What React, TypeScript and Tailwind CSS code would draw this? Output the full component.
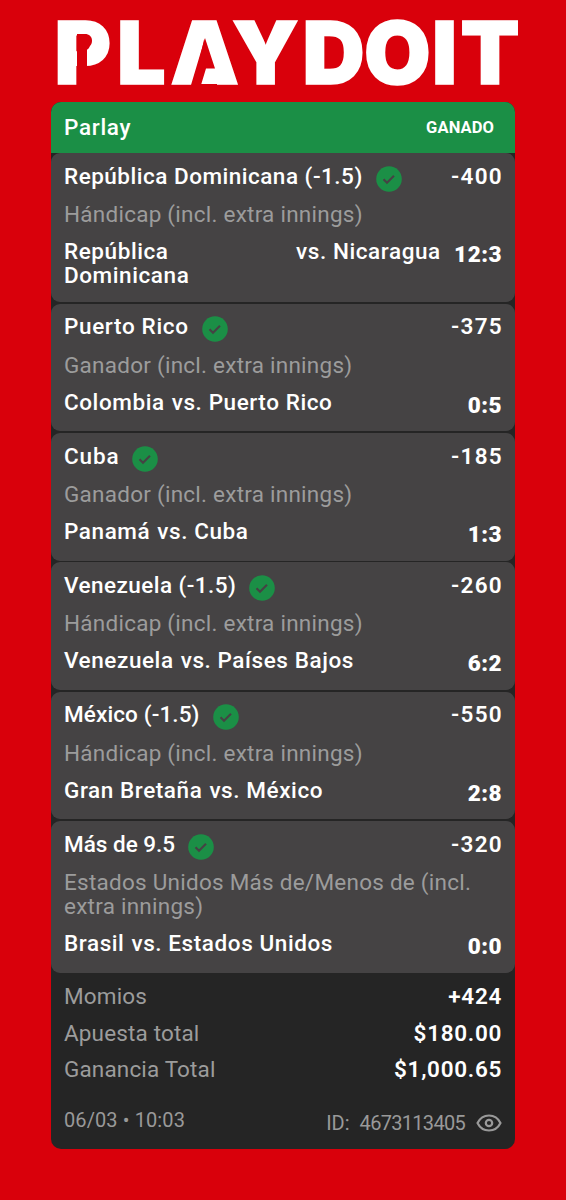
type Leg = {
  pick: string
  pickSpacing: string
  odds: string
  market: string
  home: string
  away: string
  score: string
  stacked?: boolean
}

const legs: Leg[] = [
  { pick: 'República Dominicana (-1.5)', pickSpacing: 'tracking-[0.5px]', odds: '-400', market: 'Hándicap (incl. extra innings)', home: 'República Dominicana', away: 'Nicaragua', score: '12:3', stacked: true },
  { pick: 'Puerto Rico', pickSpacing: 'tracking-[0.65px]', odds: '-375', market: 'Ganador (incl. extra innings)', home: 'Colombia', away: 'Puerto Rico', score: '0:5' },
  { pick: 'Cuba', pickSpacing: 'tracking-[0.85px]', odds: '-185', market: 'Ganador (incl. extra innings)', home: 'Panamá', away: 'Cuba', score: '1:3' },
  { pick: 'Venezuela (-1.5)', pickSpacing: 'tracking-[0.45px]', odds: '-260', market: 'Hándicap (incl. extra innings)', home: 'Venezuela', away: 'Países Bajos', score: '6:2' },
  { pick: 'México (-1.5)', pickSpacing: 'tracking-[0.12px]', odds: '-550', market: 'Hándicap (incl. extra innings)', home: 'Gran Bretaña', away: 'México', score: '2:8' },
  { pick: 'Más de 9.5', pickSpacing: 'tracking-[0px]', odds: '-320', market: 'Estados Unidos Más de/Menos de (incl. extra innings)', home: 'Brasil', away: 'Estados Unidos', score: '0:0' },
]

const totals = [
  { label: 'Momios', value: '+424' },
  { label: 'Apuesta total', value: '$180.00' },
  { label: 'Ganancia Total', value: '$1,000.65' },
]

function Logo() {
  return (
    <svg viewBox="0 0 566 102" className="block h-[102px] w-[566px] shrink-0 overflow-visible">
      <text
        y="83.5"
        x="54.5 117 170.5 232 302.5 364 432 460.5"
        fontSize="86"
        strokeWidth="1.6"
        className="fill-white stroke-white font-['Inter',sans-serif] font-black"
      >
        PLAYDOIT
      </text>
      {/* stencil cuts in the P and the A */}
      <path d="M77 34h8c4 0 7 2.500 7 6.500s-2 6-5 7V86H77z" fill="#d9000b" />
      <polygon points="206,66 219,66 225,84 200,84" fill="#fff" />
      <polygon points="205,38 215,68.5 206,68.5 201,85 191,85" fill="#d9000b" />
    </svg>
  )
}

function CheckBadge() {
  return (
    <svg viewBox="0 0 26 26" className="mt-[2px] ml-[13px] size-[26px] shrink-0">
      <circle cx="13" cy="13" r="12.8" fill="#1b8f46" />
      <path d="M7.500 13.300l3.500 3.400 7-7" fill="none" stroke="#454344" strokeWidth="2.200" />
    </svg>
  )
}

function LegCard({ leg }: { leg: Leg }) {
  return (
    <div className={`rounded-[9px] bg-[#454344] px-[13px] pt-[10.500px] ${leg.stacked ? 'pb-[14.600px]' : 'pb-[17.500px]'}`}>
      <div className="flex h-6 items-start">
        <span className={`font-medium text-white ${leg.pickSpacing}`}>{leg.pick}</span>
        <CheckBadge />
        <span className="-mr-px ml-auto font-semibold tracking-[1.300px] text-white">{leg.odds}</span>
      </div>
      <div className="mt-[14.500px] tracking-[0.250px] text-[#9c9c9c]">{leg.market}</div>
      <div className="mt-[13px] flex items-start justify-between font-medium tracking-[0.580px] text-white">
        <div className="flex">
          <span className={leg.stacked ? 'w-[232px]' : 'mr-[7px]'}>{leg.home}</span>
          <span className="whitespace-nowrap">vs. {leg.away}</span>
        </div>
        <span className="mt-[3px] h-[21px] font-black tracking-[0.500px]">{leg.score}</span>
      </div>
    </div>
  )
}

function EyeIcon() {
  return (
    <svg viewBox="0 0 26 18" className="ml-[11px] h-[18px] w-[26px]" fill="none" stroke="#999" strokeWidth="2.200">
      <path d="M1.500 9C4 4 8.300 1.500 13 1.500S22 4 24.500 9C22 14 17.700 16.500 13 16.500S4 14 1.500 9z" strokeLinejoin="round" />
      <circle cx="13" cy="9" r="3.200" />
    </svg>
  )
}

export default function App() {
  return (
    <div className="flex h-[1200px] w-[566px] flex-col bg-[#d9000b] font-['Roboto',sans-serif] text-[22.500px] leading-6 tracking-[0.500px]">
      <Logo />
      <div className="ml-[51px] flex h-[1046.500px] w-[464px] flex-col overflow-hidden rounded-[10px] bg-[#252525]">
        <div className="flex h-[51.200px] shrink-0 items-center justify-between bg-[#1b8f46] pr-[21px] pb-px pl-[13px] text-white">
          <span className="font-medium tracking-[0.700px]">Parlay</span>
          <span className="mt-[2px] text-[16.500px] font-bold tracking-[0.100px]">GANADO</span>
        </div>
        <div className="flex flex-col gap-[1.900px]">
          {legs.map((leg) => (
            <LegCard key={leg.pick} leg={leg} />
          ))}
        </div>
        <div className="flex flex-col gap-[12.700px] px-[13px] pt-[11.300px]">
          {totals.map((row) => (
            <div key={row.label} className="flex justify-between">
              <span className="tracking-[0.150px] text-[#9c9c9c]">{row.label}</span>
              <span className="font-semibold tracking-[0.700px] text-white">{row.value}</span>
            </div>
          ))}
        </div>
        <div className="mt-[26.500px] flex items-start justify-between px-[13px] text-[20px] text-[#999]">
          <span className="tracking-[0.100px]">06/03 • 10:03</span>
          <div className="mt-[3px] flex items-center">
            <span className="mr-[10px] tracking-normal">ID:</span>
            <span className="tracking-[-0.700px]">4673113405</span>
            <EyeIcon />
          </div>
        </div>
      </div>
    </div>
  )
}
